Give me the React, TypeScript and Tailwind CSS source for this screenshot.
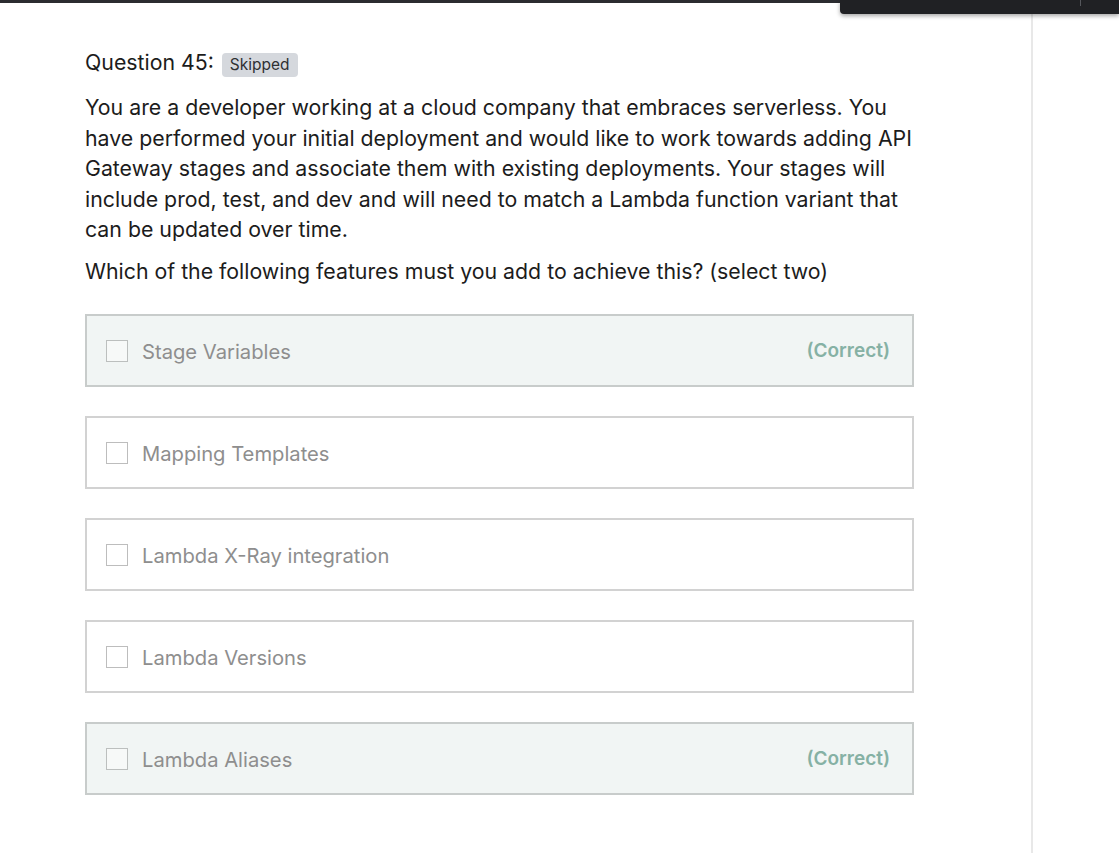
import React from 'react';

const options = [
  { label: 'Stage Variables', correct: true },
  { label: 'Mapping Templates', correct: false },
  { label: 'Lambda X-Ray integration', correct: false },
  { label: 'Lambda Versions', correct: false },
  { label: 'Lambda Aliases', correct: true },
];

export default function App() {
  return (
    <div className="relative min-h-[854px] w-[1119px] overflow-hidden bg-white font-['Inter',sans-serif]">
      {/* top strip */}
      <div className="h-[3px] w-full bg-[#2b2c30]" />
      <div className="absolute right-0 top-0 flex h-[14px] w-[279px] justify-end rounded-bl-[4px] bg-[#202124] shadow-[0_2px_4px_rgba(0,0,0,0.35)]">
        <div className="mr-[38px] h-[6px] w-px bg-[#55575c]" />
      </div>

      <div className="flex">
        <div className="w-[1033px] border-r-2 border-[#e8e8e8] pl-[85px] pt-[45px] pb-[58px]">
          <div className="flex h-[28px] items-start gap-[8px]">
            <span className="text-[21.3px] leading-[28px] text-[#1c1c1c]">Question 45:</span>
            <span className="mt-[5px] rounded-[4px] bg-[#d5d8dd] px-[8px] py-[3px] text-[15.5px] leading-[18px] text-[#2f3033]">
              Skipped
            </span>
          </div>

          <p className="mt-[16px] w-[840px] text-[21.3px] leading-[30.5px] text-[#1c1c1c]">
            You are a developer working at a cloud company that embraces serverless. You have performed your initial
            deployment and would like to work towards adding API Gateway stages and associate them with existing
            deployments. Your stages will include prod, test, and dev and will need to match a Lambda function variant
            that can be updated over time.
          </p>
          <p className="mt-[11px] text-[21.3px] leading-[30.5px] text-[#1c1c1c]">
            Which of the following features must you add to achieve this? (select two)
          </p>

          <div className="mt-[28px] flex w-[829px] flex-col gap-[29px]">
            {options.map((o) => (
              <div
                key={o.label}
                className={
                  'flex h-[73px] items-center border-2 pl-[19px] pr-[22px] ' +
                  (o.correct ? 'border-[#c8cccb] bg-[#f1f5f4]' : 'border-[#d2d2d2] bg-white')
                }
              >
                <div
                  className={
                    'h-[22px] w-[22px] border-[1.5px] ' +
                    (o.correct ? 'border-[#bcbfbe] bg-[#f7f9f8]' : 'border-[#bdbdbd] bg-white')
                  }
                />
                <span className="ml-[14px] flex-1 pt-[3px] text-[20.2px] text-[#8e8e8e]">{o.label}</span>
                {o.correct && <span className="pt-[2px] text-[19px] font-semibold text-[#86b1a4]">(Correct)</span>}
              </div>
            ))}
          </div>
        </div>
      </div>
    </div>
  );
}
